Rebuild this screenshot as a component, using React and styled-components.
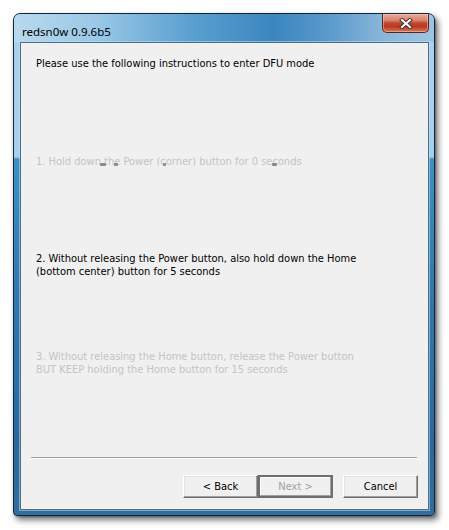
import React from "react";
import styled, { createGlobalStyle } from "styled-components";

const Global = createGlobalStyle`
  html, body { margin: 0; padding: 0; background: #ffffff; }
  body { font-family: "DejaVu Sans Condensed", "DejaVu Sans", sans-serif; }
`;

const Page = styled.div`
  padding: 13px 0 0 13px;
  width: 449px;
  height: 530px;
  box-sizing: border-box;
`;

const Window = styled.div`
  width: 422px;
  height: 503px;
  box-sizing: border-box;
  border: 1px solid #14263a;
  border-radius: 7px 7px 4px 4px;
  background: linear-gradient(
    to bottom,
    #aad2ec 0px,
    #a6cfeb 143px,
    #3f90c8 145px,
    #2f79b1 55%,
    #2a699d 85%,
    #336d9d 100%
  );
  box-shadow: 3px 4px 6px rgba(0, 0, 0, 0.55), 1px 1px 2px rgba(0, 0, 0, 0.3);
  display: flex;
  flex-direction: column;
  padding: 0 5px 5px 6px;
  overflow: hidden;
`;

const TitleBar = styled.div`
  height: 28px;
  margin: 0 -5px 0 -6px;
  padding: 0 5px 0 8px;
  display: flex;
  align-items: flex-start;
  justify-content: space-between;
  border-radius: 6px 6px 0 0;
  background: linear-gradient(
    90deg,
    #b8d9ee 0%,
    #99c8e6 20%,
    #5aa0d0 42%,
    #3b86bf 62%,
    #5b9acb 75%,
    #8ab6da 88%,
    #9fc4e2 100%
  );
`;

const Title = styled.span`
  font-family: "Noto Sans", "Open Sans", sans-serif;
  font-size: 11.5px;
  line-height: 14px;
  color: #000;
  margin-top: 11px;
`;

const CloseButton = styled.div`
  width: 47px;
  height: 19px;
  box-sizing: border-box;
  border: 1px solid #5a2418;
  border-top: none;
  border-radius: 0 0 5px 5px;
  background: linear-gradient(
    to bottom,
    #e9a898 0%,
    #d98571 35%,
    #c2462f 50%,
    #b83a24 70%,
    #d8775c 100%
  );
  box-shadow: inset 0 0 0 1px rgba(255, 220, 200, 0.45);
  display: flex;
  align-items: center;
  justify-content: center;
`;

const Client = styled.div`
  flex: 1;
  box-sizing: border-box;
  border: 1px solid #4f6c88;
  background: #f0f0f0;
  box-shadow: 0 0 0 1px rgba(190, 222, 245, 0.55);
  display: flex;
  flex-direction: column;
  font-family: "DejaVu Sans Condensed", "DejaVu Sans", sans-serif;
  font-size: 11px;
  line-height: 13px;
`;

const Steps = styled.div`
  display: grid;
  grid-template-rows: 98px 97px 98px 1fr;
  padding: 14px 15px 0 15px;
  flex: 1;
`;

const Text = styled.div`
  color: ${(p) => (p.$dim ? "#c4c4c4" : "#000000")};
  white-space: pre-line;
`;

const Clip = styled.div`
  height: 11px;
  overflow: hidden;
  position: relative;
`;

const Speck = styled.span`
  position: absolute;
  top: 8px;
  height: 3px;
  border-radius: 1px;
  background: #8a8a8a;
`;

const Separator = styled.div`
  margin: 0 11px 0 10px;
  height: 1px;
  background: #a0a0a0;
  border-bottom: 1px solid #ffffff;
`;

const ButtonRow = styled.div`
  display: flex;
  justify-content: flex-end;
  padding: 16px 10px 11px 0;
`;

const Button = styled.div`
  width: 75px;
  height: 23px;
  box-sizing: border-box;
  display: flex;
  align-items: center;
  justify-content: center;
  background: #f0f0f0;
  color: ${(p) => (p.$disabled ? "#a0a0a0" : "#000")};
  margin-left: ${(p) => p.$gap || 0}px;
  border-style: solid;
  border-width: ${(p) => (p.$focus ? "2px" : "1px")};
  border-color: ${(p) =>
    p.$focus
      ? "#6e6e6e"
      : "#ffffff #6f6f6f #6f6f6f #ffffff"};
  box-shadow: ${(p) =>
    p.$focus
      ? "inset -1px -1px 0 #a0a0a0, inset 1px 1px 0 #ffffff"
      : "inset -1px -1px 0 #a0a0a0, inset 1px 1px 0 #e3e3e3"};
`;

function CloseGlyph() {
  return (
    <svg width="14" height="11" viewBox="0 0 14 11">
      <path
        d="M3 2 L11 9 M11 2 L3 9"
        stroke="#3a2a28"
        strokeWidth="4"
        strokeLinecap="square"
      />
      <path
        d="M3 2 L11 9 M11 2 L3 9"
        stroke="#ffffff"
        strokeWidth="2.2"
        strokeLinecap="square"
      />
    </svg>
  );
}

export default function App() {
  return (
    <>
      <Global />
      <Page>
        <Window>
          <TitleBar>
            <Title>redsn0w 0.9.6b5</Title>
            <CloseButton>
              <CloseGlyph />
            </CloseButton>
          </TitleBar>
          <Client>
            <Steps>
              <Text>Please use the following instructions to enter DFU mode</Text>
              <Clip>
                <Text $dim>1. Hold down the Power (corner) button for 0 seconds</Text>
                <Speck style={{ left: 64, width: 6 }} />
                <Speck style={{ left: 78, width: 4 }} />
                <Speck style={{ left: 127, width: 3 }} />
                <Speck style={{ left: 236, width: 5 }} />
              </Clip>
              <Text>
                {"2. Without releasing the Power button, also hold down the Home\n(bottom center) button for 5 seconds"}
              </Text>
              <Text $dim>
                {"3. Without releasing the Home button, release the Power button\nBUT KEEP holding the Home button for 15 seconds"}
              </Text>
            </Steps>
            <Separator />
            <ButtonRow>
              <Button>&lt; Back</Button>
              <Button $focus $disabled>Next &gt;</Button>
              <Button $gap={10}>Cancel</Button>
            </ButtonRow>
          </Client>
        </Window>
      </Page>
    </>
  );
}
